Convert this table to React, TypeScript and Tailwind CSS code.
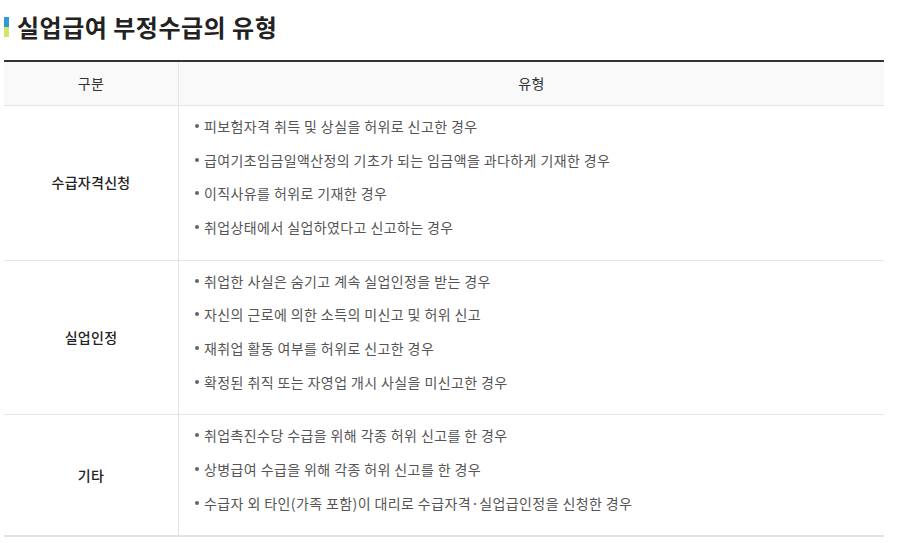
import React from "react";

const rows: { label: string; items: string[] }[] = [
  {
    label: "수급자격신청",
    items: [
      "피보험자격 취득 및 상실을 허위로 신고한 경우",
      "급여기초임금일액산정의 기초가 되는 임금액을 과다하게 기재한 경우",
      "이직사유를 허위로 기재한 경우",
      "취업상태에서 실업하였다고 신고하는 경우",
    ],
  },
  {
    label: "실업인정",
    items: [
      "취업한 사실은 숨기고 계속 실업인정을 받는 경우",
      "자신의 근로에 의한 소득의 미신고 및 허위 신고",
      "재취업 활동 여부를 허위로 신고한 경우",
      "확정된 취직 또는 자영업 개시 사실을 미신고한 경우",
    ],
  },
  {
    label: "기타",
    items: [
      "취업촉진수당 수급을 위해 각종 허위 신고를 한 경우",
      "상병급여 수급을 위해 각종 허위 신고를 한 경우",
      "수급자 외 타인(가족 포함)이 대리로 수급자격·실업급인정을 신청한 경우",
    ],
  },
];

export default function App() {
  return (
    <div
      className="w-[920px] h-[543px] bg-white overflow-hidden"
      style={{ fontFamily: '"Noto Sans CJK KR", "Noto Sans", sans-serif' }}
    >
      <div className="flex items-center pl-[4px] pt-[8px] h-[60px] pb-[14px]">
        <div className="flex flex-col w-[5px] mr-[8px]">
          <div className="h-[10px] bg-[#2e9ad6]" />
          <div className="h-[10px] bg-[#d3e66c]" />
        </div>
        <h1 className="text-[24px] font-bold text-[#222] leading-[30px] tracking-[0.5px]">
          실업급여 부정수급의 유형
        </h1>
      </div>
      <div className="ml-[4px] w-[880px] border-t-2 border-[#333] border-b-2 border-b-[#e3e3e3]">
        <div className="flex h-[44px] bg-[#f9f9f9] border-b border-[#e5e5e5] text-[14px] text-[#333] tracking-[0.3px]">
          <div className="w-[175px] flex items-center justify-center border-r border-[#e5e5e5]">
            구분
          </div>
          <div className="flex-1 flex items-center justify-center">유형</div>
        </div>
        {rows.map((r, i) => (
          <div
            key={r.label}
            className={`flex ${i < rows.length - 1 ? "border-b border-[#e5e5e5]" : ""}`}
          >
            <div className="w-[175px] flex items-center justify-center border-r border-[#e5e5e5] text-[14px] font-medium text-[#222] tracking-[0.3px]">
              {r.label}
            </div>
            <ul className="flex-1 pl-[16px] pt-[10px] pb-[9px]">
              {r.items.map((it) => (
                <li
                  key={it}
                  className="flex items-center h-[20px] mb-[13.67px] text-[14px] text-[#555] leading-[20px] tracking-[0.4px]"
                >
                  <span className="w-[4px] h-[4px] rounded-full bg-[#666] mr-[5px] shrink-0" />
                  {it}
                </li>
              ))}
            </ul>
          </div>
        ))}
      </div>
    </div>
  );
}
